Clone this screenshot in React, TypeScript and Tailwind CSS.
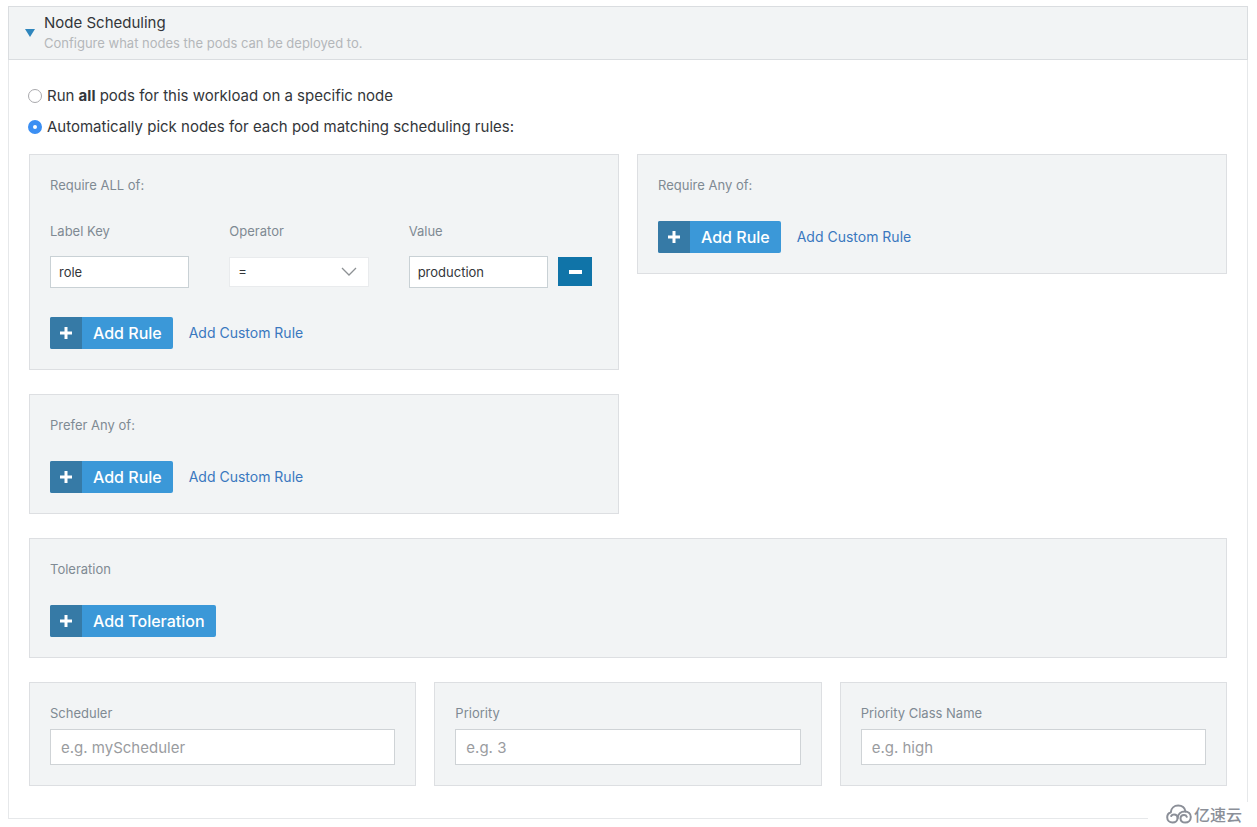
import { useState } from 'react'
import type { ReactNode } from 'react'

function Box({ title, className = '', children }: { title: string; className?: string; children: ReactNode }) {
  return (
    <section className={`border border-[#dddfe2] bg-[#f2f4f5] p-5 ${className}`}>
      <h3 className="mb-[25px] text-[13px] leading-[21px] text-[#7f8a93]">{title}</h3>
      {children}
    </section>
  )
}

function AddButton({ label }: { label: string }) {
  return (
    <button type="button" className="flex h-8 items-stretch overflow-hidden rounded-xs bg-[#3b98d8] text-white">
      <span className="flex w-8 items-center justify-center bg-[#367aa6]">
        <svg viewBox="0 0 12 12" className="size-3" fill="currentColor">
          <path d="M4.5 0h3v4.5H12v3H7.500V12h-3V7.500H0v-3h4.500z" />
        </svg>
      </span>
      <span className="flex items-center px-[11px] text-base font-medium">{label}</span>
    </button>
  )
}

function RuleActions() {
  return (
    <div className="flex items-center gap-4">
      <AddButton label="Add Rule" />
      <a href="#" className="text-sm text-[#3a78bf]">
        Add Custom Rule
      </a>
    </div>
  )
}

function TextField({ id, label, placeholder }: { id: string; label: string; placeholder: string }) {
  return (
    <div className="border border-[#dddfe2] bg-[#f2f4f5] p-5">
      <label htmlFor={id} className="mb-[5px] block text-[13px] leading-[21px] text-[#7f8a93]">
        {label}
      </label>
      <input
        id={id}
        type="text"
        placeholder={placeholder}
        className="block h-9 w-full border border-[#cfd3d6] bg-white px-2.5 text-[15px] placeholder-[#9a9c9f] outline-none"
      />
    </div>
  )
}

export default function App() {
  const [mode, setMode] = useState('auto')
  const [labelKey, setLabelKey] = useState('role')
  const [value, setValue] = useState('production')

  const radio =
    'size-3.5 appearance-none rounded-full border border-[#a9a9ad] bg-white checked:border-[5px] checked:border-[#3b8ff3]'
  const fieldLabel = 'mb-3.5 block text-[13px] leading-[21px] text-[#7f8a93]'
  const fieldInput = 'block h-8 w-full border border-[#c9d1d5] bg-white px-2 text-[13px] text-[#33363a] outline-none'

  return (
    <div className="relative bg-white pt-1.5 pr-[9px] pb-2 pl-2 font-['Inter',sans-serif] text-[#33363a]">
      <div className="border border-[#e6e8ea]">
        <header className="-mx-px -mt-px flex items-center gap-[9px] border border-[#dadde0] bg-[#f2f4f5] px-4 py-[5px]">
          <svg viewBox="0 0 10 8" className="h-2 w-2.5 shrink-0" fill="#2f86bd">
            <path d="M0 0h10L5 8z" />
          </svg>
          <div>
            <h2 className="text-[15px] leading-[21px]">Node Scheduling</h2>
            <p className="text-[13px] leading-[21px] text-[#b4b7ba]">Configure what nodes the pods can be deployed to.</p>
          </div>
        </header>

        <div className="px-5 pt-6 pb-8">
          <div className="mb-[15px] -ml-px space-y-[7px] text-[15px] leading-6">
            <label className="flex items-center gap-[5px]">
              <input
                type="radio"
                name="mode"
                className={radio}
                checked={mode === 'specific'}
                onChange={() => setMode('specific')}
              />
              <span>
                Run <strong>all</strong> pods for this workload on a specific node
              </span>
            </label>
            <label className="flex items-center gap-[5px]">
              <input
                type="radio"
                name="mode"
                className={radio}
                checked={mode === 'auto'}
                onChange={() => setMode('auto')}
              />
              <span>Automatically pick nodes for each pod matching scheduling rules:</span>
            </label>
          </div>

          <div className="grid grid-cols-2 items-start gap-x-[18px] gap-y-6">
            <Box title="Require ALL of:">
              <div className="mb-[29px] flex items-end gap-2.5 pr-1.5">
                <div className="grid flex-1 grid-cols-3 gap-10">
                  <div>
                    <label htmlFor="label-key" className={fieldLabel}>
                      Label Key
                    </label>
                    <input
                      id="label-key"
                      type="text"
                      className={fieldInput}
                      value={labelKey}
                      onChange={(e) => setLabelKey(e.target.value)}
                    />
                  </div>
                  <div>
                    <label htmlFor="operator" className={fieldLabel}>
                      Operator
                    </label>
                    <div className="relative py-px">
                      <select
                        id="operator"
                        className="block h-[30px] w-full appearance-none border border-[#e9ebed] bg-white px-2 text-[13px] text-[#33363a] outline-none"
                      >
                        <option>=</option>
                        <option>!=</option>
                      </select>
                      <svg
                        viewBox="0 0 16 9"
                        className="pointer-events-none absolute top-[11px] right-3 h-[9px] w-4"
                        fill="none"
                        stroke="#8d9194"
                        strokeWidth="1.3"
                      >
                        <path d="M1 1l7 7 7-7" />
                      </svg>
                    </div>
                  </div>
                  <div>
                    <label htmlFor="value" className={fieldLabel}>
                      Value
                    </label>
                    <input
                      id="value"
                      type="text"
                      className={fieldInput}
                      value={value}
                      onChange={(e) => setValue(e.target.value)}
                    />
                  </div>
                </div>
                <button
                  type="button"
                  aria-label="Remove rule"
                  className="mb-0.5 flex h-[29px] w-[34px] items-center justify-center bg-[#1074a8]"
                >
                  <span className="h-1 w-[13px] bg-white" />
                </button>
              </div>
              <RuleActions />
            </Box>

            <Box title="Require Any of:">
              <RuleActions />
            </Box>

            <Box title="Prefer Any of:">
              <RuleActions />
            </Box>

            <Box title="Toleration" className="col-span-2">
              <AddButton label="Add Toleration" />
            </Box>
          </div>

          <div className="mt-6 grid grid-cols-3 gap-[18px]">
            <TextField id="scheduler" label="Scheduler" placeholder="e.g. myScheduler" />
            <TextField id="priority" label="Priority" placeholder="e.g. 3" />
            <TextField id="priority-class" label="Priority Class Name" placeholder="e.g. high" />
          </div>
        </div>
      </div>

      {/* site logo over the corner */}
      <div className="absolute right-0 bottom-0 flex h-[25px] w-[109px] items-center gap-0.5 bg-white pb-0.5 pl-[18px] text-[#8b8f98]">
        <svg
          viewBox="0 0 26 20"
          className="h-5 w-[26px] shrink-0"
          fill="none"
          stroke="currentColor"
          strokeWidth="2"
          strokeLinecap="round"
        >
          {/* dome running down into the left curl */}
          <path d="M19.500 7.400C18.800 3.900 15.900 1.500 12.200 1.500c-4 0-7.100 2.800-7.400 6.700C2.600 9 1.200 11 1.200 13.300c0 3 2.300 5.300 5.400 5.300 3 0 5-2 5-4.500 0-2.200-1.500-3.700-3.600-3.700-1.300 0-2.300.6-2.800 1.600" />
          {/* right curl */}
          <path d="M11.600 14.100c.3-4 3.300-6.700 7.200-6.700 3.500 0 6 2.500 6 5.600s-2.400 5.600-5.600 5.600c-2.800 0-4.700-1.800-4.700-4.100 0-2 1.500-3.500 3.500-3.500 1.400 0 2.400.7 2.800 1.800" />
        </svg>
        <span className="font-['Noto_Sans_CJK_SC',sans-serif] text-base leading-5 font-medium whitespace-nowrap">
          亿速云
        </span>
      </div>
    </div>
  )
}
